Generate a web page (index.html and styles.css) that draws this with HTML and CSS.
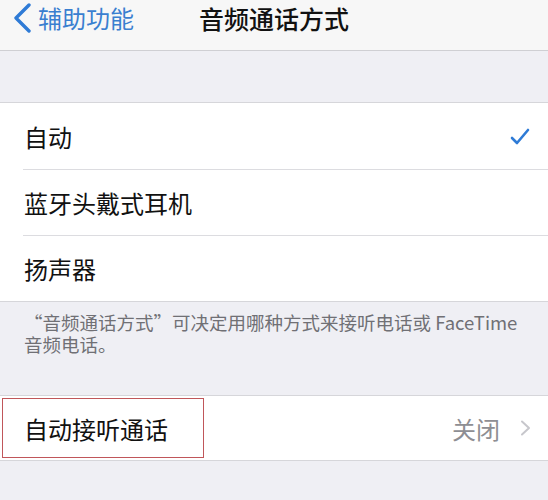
FILE: index.html
```html
<!DOCTYPE html>
<html lang="zh-CN">

<head>
    <meta charset="UTF-8">
    <meta name="viewport" content="width=device-width, initial-scale=1.0">
    <title>音频通话方式</title>
    <link rel="stylesheet" href="styles.css">
</head>

<body>
    <header class="nav">
        <a class="nav-back">
            <svg class="back-icon" width="20" height="30" viewBox="0 0 20 30">
                <path d="M17 2 L4 15 L17 28" fill="none" stroke="#2f7bd6" stroke-width="3.4"
                    stroke-linecap="round" stroke-linejoin="round" />
            </svg>
            <span>辅助功能</span>
        </a>
        <h1 class="nav-title">音频通话方式</h1>
        <div></div>
    </header>

    <div class="spacer"></div>

    <ul class="group">
        <li class="cell">
            <span>自动</span>
            <svg class="check" width="20" height="17" viewBox="0 0 20 17">
                <path d="M2 10 L7 15 L18 2" fill="none" stroke="#2f7bd6" stroke-width="2.6"
                    stroke-linecap="round" stroke-linejoin="round" />
            </svg>
        </li>
        <li class="cell"><span>蓝牙头戴式耳机</span></li>
        <li class="cell"><span>扬声器</span></li>
    </ul>

    <p class="footer">“音频通话方式”可决定用哪种方式来接听电话或 FaceTime 音频电话。</p>

    <ul class="group">
        <li class="cell cell-link">
            <span>自动接听通话</span>
            <span class="detail">关闭</span>
            <svg class="chevron" width="12" height="16" viewBox="0 0 12 16">
                <path d="M2 1.5 L9 8 L2 14.5" fill="none" stroke="#c7c7cc" stroke-width="2"
                    stroke-linecap="round" stroke-linejoin="round" />
            </svg>
            <div class="highlight"></div>
        </li>
    </ul>
</body>

</html>
```

FILE: styles.css
```css
* {
    margin: 0;
    padding: 0;
    box-sizing: border-box;
}

body {
    background-color: #efeff4;
    font-family: "Noto Sans CJK SC", "Noto Sans", sans-serif;
    color: #111;
}

.nav {
    display: grid;
    grid-template-columns: 1fr auto 1fr;
    align-items: start;
    height: 51px;
    padding-top: 1px;
    background-color: #f7f7f7;
    border-bottom: 1px solid #cfcfd3;
}

.nav-back {
    display: flex;
    align-items: center;
    color: #3a7fd0;
    font-size: 24px;
    line-height: 34px;
}

.back-icon {
    margin-left: 12px;
    margin-right: 6px;
}

.nav-title {
    font-size: 25px;
    font-weight: 500;
    line-height: 34px;
    color: #111;
}

.spacer {
    height: 51px;
}

.group {
    list-style: none;
    background-color: #fff;
    border-top: 1px solid #d6d6da;
    border-bottom: 1px solid #d6d6da;
}

.cell {
    position: relative;
    display: flex;
    align-items: center;
    height: 66px;
    padding: 0 18px 0 24px;
    font-size: 24px;
}

.cell+.cell::before {
    content: "";
    position: absolute;
    top: 0;
    left: 23px;
    right: 0;
    border-top: 1px solid #dcdce0;
}

.cell>span:first-child {
    flex: 1;
}

.footer {
    padding: 9px 24px 40px;
    font-size: 18.5px;
    line-height: 22px;
    color: #707075;
}

.cell-link {
    height: 64px;
}

.detail {
    color: #8e8e93;
    font-size: 24px;
    margin-right: 20px;
}

.chevron {
    margin-right: -2px;
}

.highlight {
    position: absolute;
    left: 2px;
    top: 2px;
    width: 202px;
    height: 60px;
    border: 1px solid #c0565a;
}
```
